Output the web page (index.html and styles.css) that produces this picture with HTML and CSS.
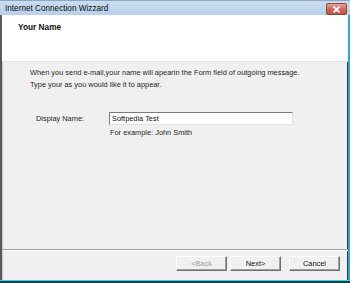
FILE: index.html
```html
<!DOCTYPE html>
<html lang="en">
<head>
    <meta charset="UTF-8">
    <title>Internet Connection Wizzard</title>
    <link rel="stylesheet" href="styles.css">
</head>
<body>
    <div class="window">
        <!-- Title bar -->
        <div class="titlebar">
            <span class="title">Internet Connection Wizzard</span>
            <span class="close-btn">
                <svg width="9" height="7" viewBox="0 0 9 7">
                    <path d="M1.5 0.5 L7.5 6.5 M7.5 0.5 L1.5 6.5" stroke="#fff" stroke-width="1.8"/>
                </svg>
            </span>
        </div>

        <div class="client">
            <div class="header">
                <h2>Your Name</h2>
            </div>

            <div class="content">
                <p class="intro">When you send e-mail,your name will apearin the Form field of outgoing message.<br>Type your as you would like it to appear.</p>

                <div class="field-row">
                    <label for="displayName">Display Name:</label>
                    <div class="field">
                        <input type="text" id="displayName" value="Softpedia Test">
                        <span class="hint">For example: John Smith</span>
                    </div>
                </div>
            </div>

            <div class="footer">
                <button class="btn" disabled>&lt;Back</button>
                <button class="btn">Next&gt;</button>
                <button class="btn cancel">Cancel</button>
            </div>
        </div>
        <div class="bottom-edge"></div>
    </div>
</body>
</html>
```

FILE: styles.css
```css
html, body {
    margin: 0;
    padding: 0;
}
body {
    font-family: "Liberation Sans", Arial, sans-serif;
    font-size: 7.4px;
    color: #1e1e1e;
    background: #0b4650;
}
.window {
    width: 350px;
    height: 283px;
    display: flex;
    flex-direction: column;
    overflow: hidden;
}
.titlebar {
    height: 15px;
    flex: none;
    display: flex;
    align-items: center;
    justify-content: space-between;
    background: linear-gradient(#c9dcf1, #b8d0ea);
    border-top: 1px solid #8fa6c0;
    box-sizing: border-box;
    padding: 0 3px 0 5px;
}
.title {
    font-size: 8.2px;
    color: #0c0c0c;
}
.close-btn {
    width: 19px;
    height: 10px;
    margin-top: 2px;
    border-radius: 2px;
    border: 1px solid #8a4a40;
    background: linear-gradient(#e8a597, #d06a58 50%, #c2523e);
    display: flex;
    align-items: center;
    justify-content: center;
}
.client {
    flex: 1;
    display: flex;
    flex-direction: column;
    border-left: 2px solid #5a5a5a;
    border-right: 2px solid #2aa8dc;
    box-shadow: inset -1px 0 0 #1b3550, inset 1px 0 0 #c8c8c8;
    background: #f0f0f0;
}
.header {
    height: 47px;
    flex: none;
    background: #fff;
    border-bottom: 1px solid #e2e2e2;
    box-sizing: border-box;
    padding: 7px 0 0 16px;
}
.header h2 {
    margin: 0;
    font-size: 8.3px;
    font-weight: bold;
    color: #111;
}
.content {
    flex: 1;
    padding: 5px 0 0 28px;
}
.intro {
    margin: 0;
    line-height: 12px;
}
.field-row {
    display: flex;
    margin-top: 21px;
    padding-left: 6px;
}
.field-row label {
    width: 73px;
    line-height: 13px;
}
.field {
    display: flex;
    flex-direction: column;
}
.field input {
    width: 184px;
    height: 13px;
    box-sizing: border-box;
    margin: 0;
    padding: 0 2px;
    font-family: inherit;
    font-size: 7.4px;
    color: #111;
    background: #fff;
    border: 1px solid;
    border-color: #7a7a7a #e3e3e3 #e3e3e3 #7a7a7a;
    outline: none;
}
.hint {
    margin-top: 3px;
    padding-left: 1px;
    line-height: 10px;
}
.footer {
    height: 31px;
    flex: none;
    display: flex;
    justify-content: flex-end;
    align-items: flex-start;
    gap: 3px;
    box-sizing: border-box;
    padding: 6px 8px 0 0;
    border-top: 1px solid #a0a0a0;
    box-shadow: inset 0 1px 0 #fff;
}
.btn {
    width: 51px;
    height: 15px;
    margin: 0;
    padding: 0;
    font-family: inherit;
    font-size: 7.4px;
    color: #111;
    background: #f0f0f0;
    border: 1px solid;
    border-color: #fff #6f6f6f #6f6f6f #fff;
    box-shadow: inset -1px -1px 0 #a0a0a0;
}
.btn:disabled {
    color: #a0a0a0;
}
.cancel {
    margin-left: 5px;
}
.bottom-edge {
    height: 2px;
    flex: none;
    background: #0b4650;
    border-top: 1px solid #4cc6dc;
}
```
